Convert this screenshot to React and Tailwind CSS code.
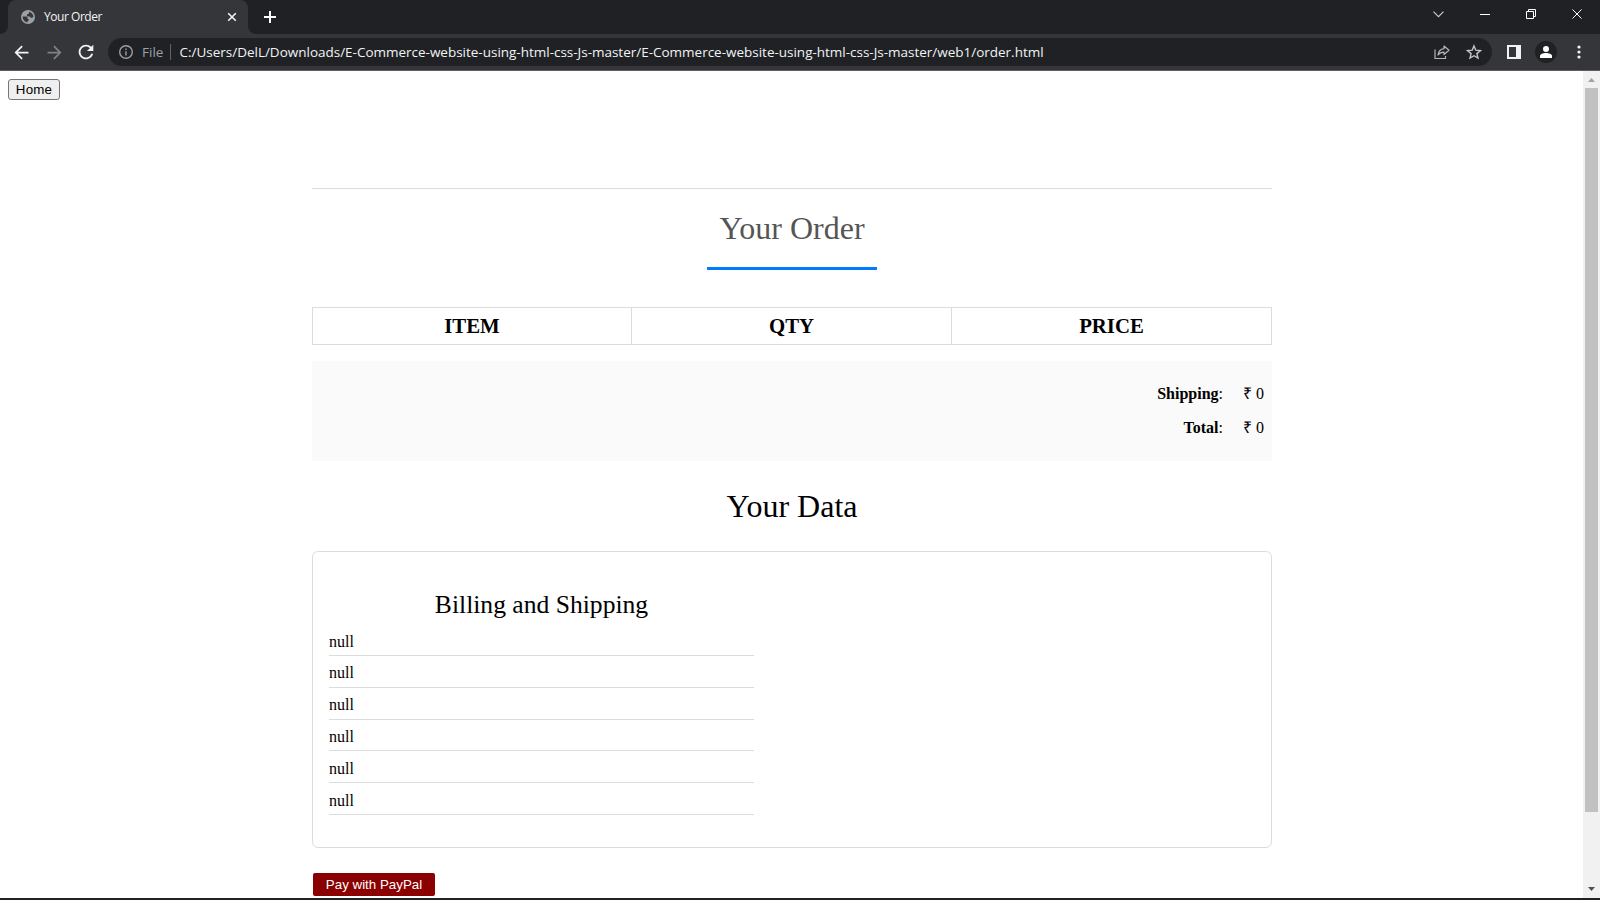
import React from 'react';

function TabStrip() {
  return (
    <div className="flex h-[34px] shrink-0 bg-[#202124]">
      <div className="flex w-2 items-end bg-[#35363a]">
        <div className="h-full w-2 rounded-br-lg bg-[#202124]" />
      </div>
      <div className="flex w-[240px] items-center rounded-t-lg bg-[#35363a] pl-[13px] pr-[11px]">
        <svg className="size-[14px] shrink-0" viewBox="0 0 14 14">
          <circle cx="7" cy="7" r="7" fill="#9aa0a6" />
          <path
            d="M1.6 6.6h3.2c1.3 0 1.8.7 1.8 1.6 0 .6.5.9 1.100.9v1.300c-1 .2-1.400.8-1.400 2C3.600 12 1.700 9.700 1.600 6.600zM8 1.700c2.500.5 4.300 2.600 4.400 5.100-.6.9-1.300 1.200-2.300 1-.8-.2-1-.8-1.200-1.300H6.800c-.7-.1-.9-.6-.9-1.200 0-.9.5-1.300 1.200-1.400.8-.1.9-.6.9-2.200z"
            fill="#35363a"
          />
        </svg>
        <span className="ml-[9px] grow whitespace-nowrap font-['Open_Sans',sans-serif] text-[12px] leading-4 tracking-[-0.46px] text-[#f1f3f4]">
          Your Order
        </span>
        <svg className="size-[10px] shrink-0" viewBox="0 0 10 10" stroke="#f1f3f4" strokeWidth="1.600">
          <path d="M1.200 1.200l7.600 7.600M8.800 1.200L1.200 8.800" />
        </svg>
      </div>
      <div className="flex w-2 bg-[#35363a]">
        <div className="h-full w-2 rounded-bl-lg bg-[#202124]" />
      </div>
      <div className="flex grow items-center justify-between pl-2 pr-[18px]">
        <svg className="size-3" viewBox="0 0 12 12" stroke="#fff" strokeWidth="2">
          <path d="M6 0v12M0 6h12" />
        </svg>
        <div className="flex items-center pb-[6px]">
          <svg className="mr-[36px] h-[7px] w-[11px]" viewBox="0 0 11 7" fill="none" stroke="#d0d1d3" strokeWidth="1.100">
            <path d="M.5.700l5 5 5-5" />
          </svg>
          <svg className="mr-[36px] h-[10px] w-[10px]" viewBox="0 0 10 10" fill="#fff">
            <path d="M0 5h10v1H0z" />
          </svg>
          <svg className="mr-[36px] size-[10px]" viewBox="0 0 10 10" fill="none" stroke="#fff">
            <path d="M.5 2.500h7v7h-7zM2.500 2.500v-2h7v7h-2" />
          </svg>
          <svg className="size-[10px]" viewBox="0 0 11 11" fill="none" stroke="#fff" strokeWidth="1.100">
            <path d="M.5.500l10 10M10.500.500l-10 10" />
          </svg>
        </div>
      </div>
    </div>
  );
}

function Toolbar() {
  return (
    <div className="flex h-[37px] shrink-0 items-center border-b border-[#5e5b62] bg-[#35363a] pl-[11px] pr-[10px]">
      <svg className="size-[21px] shrink-0" viewBox="0 0 24 24" fill="#f1f3f4">
        <path d="M20 11H7.830l5.590-5.590L12 4l-8 8 8 8 1.410-1.410L7.830 13H20v-2z" />
      </svg>
      <svg className="ml-[12px] size-[21px] shrink-0" viewBox="0 0 24 24" fill="#7f8184">
        <path d="M12 4l-1.410 1.410L16.170 11H4v2h12.170l-5.580 5.590L12 20l8-8z" />
      </svg>
      <svg className="ml-[10px] size-[22px] shrink-0" viewBox="0 0 24 24" fill="#f1f3f4">
        <path d="M17.650 6.350C16.200 4.900 14.210 4 12 4c-4.420 0-7.990 3.580-7.990 8s3.570 8 7.990 8c3.730 0 6.840-2.550 7.730-6h-2.080c-.820 2.330-3.040 4-5.650 4-3.310 0-6-2.690-6-6s2.690-6 6-6c1.660 0 3.140.690 4.220 1.780L13 11h7V4l-2.350 2.350z" />
      </svg>
      <div className="ml-[11px] flex h-7 w-[1384px] shrink-0 items-center rounded-full bg-[#202124] pl-[11px] pr-[10px]">
        <svg className="size-[14px] shrink-0" viewBox="0 0 14 14" fill="none" stroke="#9aa0a6" strokeWidth="1.400">
          <circle cx="7" cy="7" r="6.300" />
          <path d="M7 6.200v4.200M7 3.500v1.500" />
        </svg>
        <span className="ml-[9px] w-[28px] shrink-0 whitespace-nowrap font-['Open_Sans',sans-serif] text-[13.500px] leading-5 text-[#9aa0a6]">
          File
        </span>
        <span className="h-4 w-px shrink-0 bg-[#5f6368]" />
        <span className="ml-[8.500px] grow whitespace-nowrap font-['Open_Sans',sans-serif] text-[13.500px] leading-5 tracking-[-0.012px] text-[#f1f3f4]">
          C:/Users/DelL/Downloads/E-Commerce-website-using-html-css-Js-master/E-Commerce-website-using-html-css-Js-master/web1/order.html
        </span>
        <svg className="mr-[16px] size-4 shrink-0" viewBox="0 0 16 16" fill="none" stroke="#b4b5b8" strokeWidth="1.200">
          <path d="M1 5.500v9h10.500v-2.500" />
          <path d="M10 2l5 4.300-5 4.200V8.200c-2.700 0-4.500.7-6 2.800.5-3.300 2.500-5.900 6-6.300V2z" strokeLinejoin="round" />
        </svg>
        <svg className="size-4 shrink-0" viewBox="0 0 16 16" fill="none" stroke="#c4c5c8" strokeWidth="1.400">
          <path d="M8 1.900l1.800 4.300 4.600.4-3.500 3 1.100 4.500L8 11.700l-4 2.400 1.100-4.500-3.500-3 4.600-.4z" />
        </svg>
      </div>
      <svg className="ml-[15px] size-[14px] shrink-0" viewBox="0 0 14 14" fill="#f1f3f4">
        <path fillRule="evenodd" d="M0 0h14v14H0zM2 2v10h7V2z" />
      </svg>
      <div className="ml-[14px] flex size-[22px] shrink-0 items-center justify-center rounded-full bg-[#202124]">
        <svg className="size-3" viewBox="0 0 12 12" fill="#fff">
          <circle cx="6" cy="3" r="3" />
          <path d="M0 12v-2c0-1.900 3-3 6-3s6 1.100 6 3v2z" />
        </svg>
      </div>
      <svg className="ml-[19.500px] h-[14px] w-[4px] shrink-0" viewBox="0 0 4 14" fill="#f1f3f4">
        <circle cx="2" cy="2" r="1.600" />
        <circle cx="2" cy="7" r="1.600" />
        <circle cx="2" cy="12" r="1.600" />
      </svg>
    </div>
  );
}

function Scrollbar() {
  return (
    <div className="flex w-[17px] shrink-0 flex-col items-center bg-[#f1f1f1]">
      <svg className="h-[17px] w-[17px] shrink-0" viewBox="0 0 17 17" fill="#a3a3a3">
        <path d="M5 11l3.500-4 3.500 4z" />
      </svg>
      <div className="h-[724px] w-[13px] bg-[#c1c1c1]" />
      <svg className="mt-auto h-[17px] w-[17px] shrink-0" viewBox="0 0 17 17" fill="#505050">
        <path d="M5 6h7l-3.500 4z" />
      </svg>
    </div>
  );
}

function SummaryRow({ label, value }) {
  return (
    <div className="flex h-[34px] items-center justify-end pr-2 text-[16px] leading-[18px]">
      <span>
        <b>{label}</b>:
      </span>
      <span className="w-[41px] whitespace-nowrap text-right">{value}</span>
    </div>
  );
}

const headings = ['ITEM', 'QTY', 'PRICE'];
const details = ['null', 'null', 'null', 'null', 'null', 'null'];

function OrderPage() {
  return (
    <div className="flex grow flex-col bg-white pl-2 pt-2 text-black">
      <button className="h-[21px] w-[52px] rounded-[3px] border border-[#767676] bg-[#efefef] font-['Liberation_Sans',Arial,sans-serif] text-[13.333px] leading-[15px] tracking-[0.2px]">
        Home
      </button>
      <div className="ml-[304px] mt-[88px] flex w-[960px] flex-col border-t border-[#dcdcdc]">
        <h2 className="mt-[21px] text-center text-[32px] leading-[36px] text-[#555]">Your Order</h2>
        <div className="mx-auto mt-[21px] h-[3px] w-[170px] bg-[#007bff]" />
        <div className="mt-[37px] grid h-[38px] grid-cols-[319px_320px_319px] border border-[#dcdcdc]">
          {headings.map((heading, i) => (
            <div
              key={heading}
              className={
                'flex items-center justify-center text-[20.800px] font-bold leading-6' +
                (i < 2 ? ' border-r border-[#dcdcdc]' : '')
              }
            >
              {heading}
            </div>
          ))}
        </div>
        <div className="mt-4 h-[100px] bg-[#fafafa] pt-4">
          <SummaryRow label="Shipping" value="₹ 0" />
          <SummaryRow label="Total" value="₹ 0" />
        </div>
        <h2 className="mt-[27px] text-center text-[32px] leading-[36px]">Your Data</h2>
        <div className="mt-[27px] h-[297px] rounded-md border border-[#dcdcdc] pl-4 pt-[38px]">
          <div className="w-[425px]">
            <h3 className="text-center text-[25.600px] leading-[30px]">Billing and Shipping</h3>
            {details.map((detail, i) => (
              <p
                key={i}
                className="flex h-[31.800px] items-end border-b border-[#dcdcdc] pb-[4.500px] text-[16px] leading-[18px] first-of-type:mt-[4.300px]"
              >
                {detail}
              </p>
            ))}
          </div>
        </div>
        <button className="ml-px mt-[25px] h-[23px] w-[122px] rounded-[2px] bg-[#8b0000] font-['Liberation_Sans',Arial,sans-serif] text-[13.333px] leading-[15px] text-white">
          Pay with PayPal
        </button>
      </div>
    </div>
  );
}

export default function App() {
  return (
    <div className="flex h-[900px] w-[1600px] flex-col overflow-hidden font-['Liberation_Serif','Times_New_Roman',serif]">
      <TabStrip />
      <Toolbar />
      <div className="flex h-[827px] shrink-0">
        <OrderPage />
        <Scrollbar />
      </div>
      <div className="h-[2px] bg-[#202124]" />
    </div>
  );
}
